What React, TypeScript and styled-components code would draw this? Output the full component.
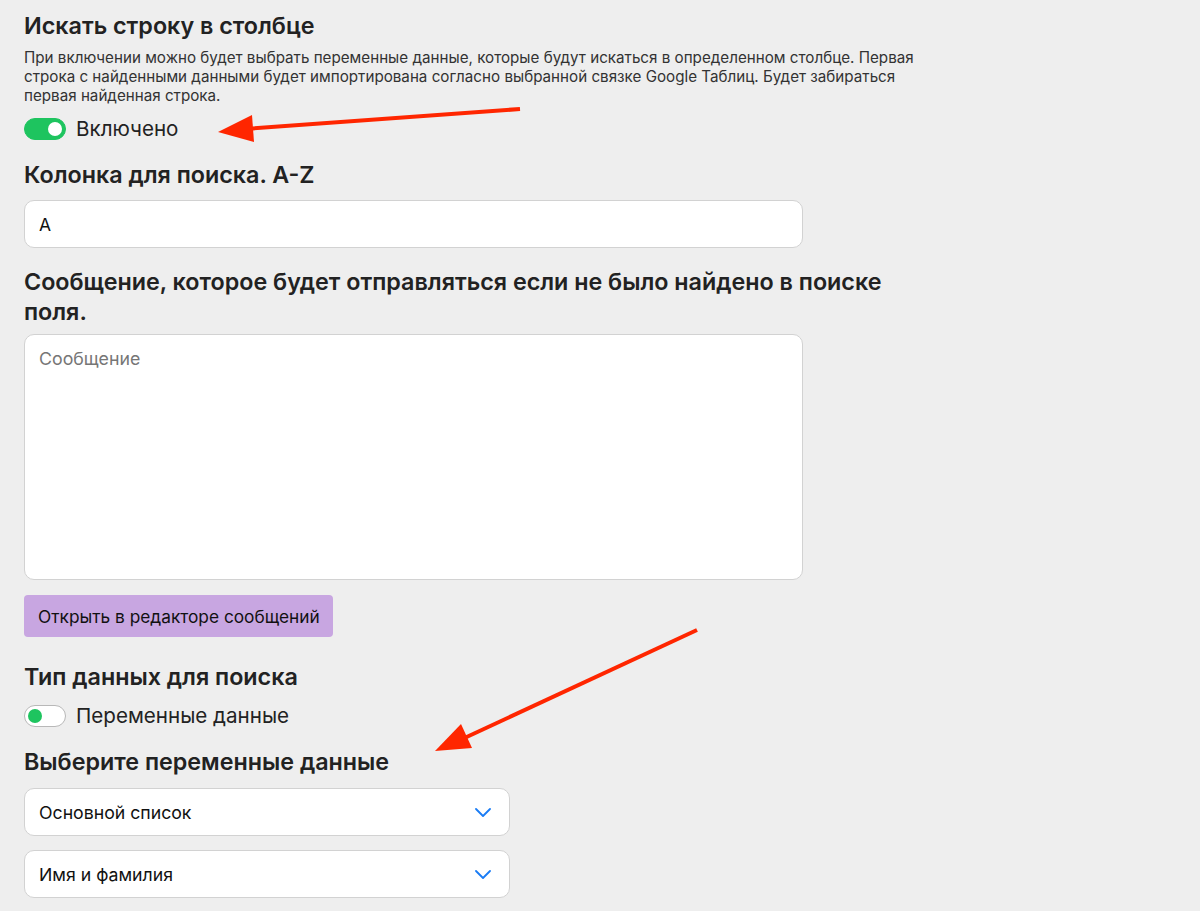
import React, { useState } from 'react';
import styled, { createGlobalStyle } from 'styled-components';

const GlobalStyle = createGlobalStyle`
  html, body {
    margin: 0;
    padding: 0;
    background: #eeeeee;
    font-family: Inter, "Noto Sans", sans-serif;
    color: #222;
  }
  * { box-sizing: border-box; }
`;

const Page = styled.div`
  position: relative;
  min-height: 911px;
  padding: 11px 24px 0;
  display: flex;
  flex-direction: column;
`;

const Section = styled.section<{ $gap?: number; $mb?: number }>`
  display: flex;
  flex-direction: column;
  gap: ${(p) => p.$gap ?? 12}px;
  margin-bottom: ${(p) => p.$mb ?? 0}px;
`;

const Heading = styled.h3`
  margin: 0;
  font-size: 23.3px;
  line-height: 30px;
  font-weight: 600;
  color: #222;
  max-width: 880px;
`;

const Description = styled.p`
  margin: 0;
  font-size: 15.2px;
  line-height: 19px;
  color: #333;
  max-width: 905px;
`;

const ToggleRow = styled.label`
  display: flex;
  align-items: center;
  gap: 10px;
  height: 22px;
  font-size: 20.6px;
  line-height: 22px;
  color: #222;
  cursor: pointer;
`;

const Track = styled.span<{ $on: boolean }>`
  width: 42px;
  height: 22px;
  border-radius: 11px;
  padding: 3px;
  display: flex;
  align-items: center;
  justify-content: ${(p) => (p.$on ? 'flex-end' : 'flex-start')};
  background: ${(p) => (p.$on ? '#1ec45f' : '#ffffff')};
  border: 1px solid ${(p) => (p.$on ? '#1ec45f' : '#b8b8b8')};
`;

const Knob = styled.span<{ $on: boolean }>`
  width: 14px;
  height: 14px;
  border-radius: 50%;
  background: ${(p) => (p.$on ? '#ffffff' : '#1ec45f')};
`;

const TextInput = styled.input`
  width: 779px;
  height: 48px;
  border: 1px solid #d2d2d2;
  border-radius: 10px;
  background: #fff;
  padding: 0 14px;
  font-family: inherit;
  font-size: 17.5px;
  color: #111;
  outline: none;
`;

const TextArea = styled.textarea`
  width: 779px;
  height: 246px;
  border: 1px solid #d2d2d2;
  border-radius: 10px;
  background: #fff;
  padding: 12px 14px;
  font-family: inherit;
  font-size: 17.8px;
  line-height: 24px;
  color: #111;
  resize: none;
  outline: none;
  &::placeholder { color: #767676; }
`;

const PurpleButton = styled.button`
  align-self: flex-start;
  width: 309px;
  height: 42px;
  padding: 0 0 0 14px;
  text-align: left;
  border: none;
  border-radius: 4px;
  background: #c8a6e1;
  font-family: inherit;
  font-size: 17.3px;
  color: #111;
  cursor: pointer;
`;

const SelectBox = styled.div`
  width: 486px;
  height: 48px;
  border: 1px solid #d2d2d2;
  border-radius: 10px;
  background: #fff;
  padding: 0 18px 0 14px;
  display: flex;
  align-items: center;
  justify-content: space-between;
  font-size: 17.7px;
  color: #111;
`;

const SelectList = styled.div`
  display: flex;
  flex-direction: column;
  gap: 14px;
`;

const Overlay = styled.svg`
  position: absolute;
  left: 0;
  top: 0;
  width: 1200px;
  height: 911px;
  pointer-events: none;
`;

const Toggle: React.FC<{ on: boolean; label: string; onToggle: () => void }> = ({ on, label, onToggle }) => (
  <ToggleRow onClick={onToggle}>
    <Track $on={on}>
      <Knob $on={on} />
    </Track>
    {label}
  </ToggleRow>
);

const Chevron = () => (
  <svg width="16" height="9" viewBox="0 0 16 9" fill="none">
    <path d="M1 1 L8 8 L15 1" stroke="#1a7cf5" strokeWidth="1.8" strokeLinecap="round" strokeLinejoin="round" />
  </svg>
);

const App: React.FC = () => {
  const [enabled, setEnabled] = useState(true);
  const [variable, setVariable] = useState(false);
  const [column, setColumn] = useState('A');

  return (
    <Page>
      <GlobalStyle />
      <Section $gap={7} $mb={13}>
        <Heading>Искать строку в столбце</Heading>
        <Description>
          При включении можно будет выбрать переменные данные, которые будут искаться в определенном столбце. Первая
          строка с найденными данными будет импортирована согласно выбранной связке Google Таблиц. Будет забираться
          первая найденная строка.
        </Description>
      </Section>
      <Section $mb={20}>
        <Toggle on={enabled} label="Включено" onToggle={() => setEnabled(!enabled)} />
      </Section>
      <Section $gap={10} $mb={19}>
        <Heading>Колонка для поиска. A-Z</Heading>
        <TextInput value={column} onChange={(e) => setColumn(e.target.value)} />
      </Section>
      <Section $gap={7} $mb={15}>
        <Heading>Сообщение, которое будет отправляться если не было найдено в поиске поля.</Heading>
        <TextArea placeholder="Сообщение" />
      </Section>
      <Section $mb={25}>
        <PurpleButton>Открыть в редакторе сообщений</PurpleButton>
      </Section>
      <Section $gap={13} $mb={20}>
        <Heading>Тип данных для поиска</Heading>
        <Toggle on={variable} label="Переменные данные" onToggle={() => setVariable(!variable)} />
      </Section>
      <Section $gap={11}>
        <Heading>Выберите переменные данные</Heading>
        <SelectList>
          <SelectBox>
            Основной список
            <Chevron />
          </SelectBox>
          <SelectBox>
            Имя и фамилия
            <Chevron />
          </SelectBox>
        </SelectList>
      </Section>

      <Overlay viewBox="0 0 1200 911">
        <line x1="520" y1="109" x2="245" y2="129" stroke="#ff2600" strokeWidth="4" />
        <polygon points="218,132 252,115 254,142" fill="#ff2600" />
        <line x1="697" y1="630" x2="458" y2="741" stroke="#ff2600" strokeWidth="4" />
        <polygon points="435,751 461,724 472,748" fill="#ff2600" />
      </Overlay>
    </Page>
  );
};

export default App;
